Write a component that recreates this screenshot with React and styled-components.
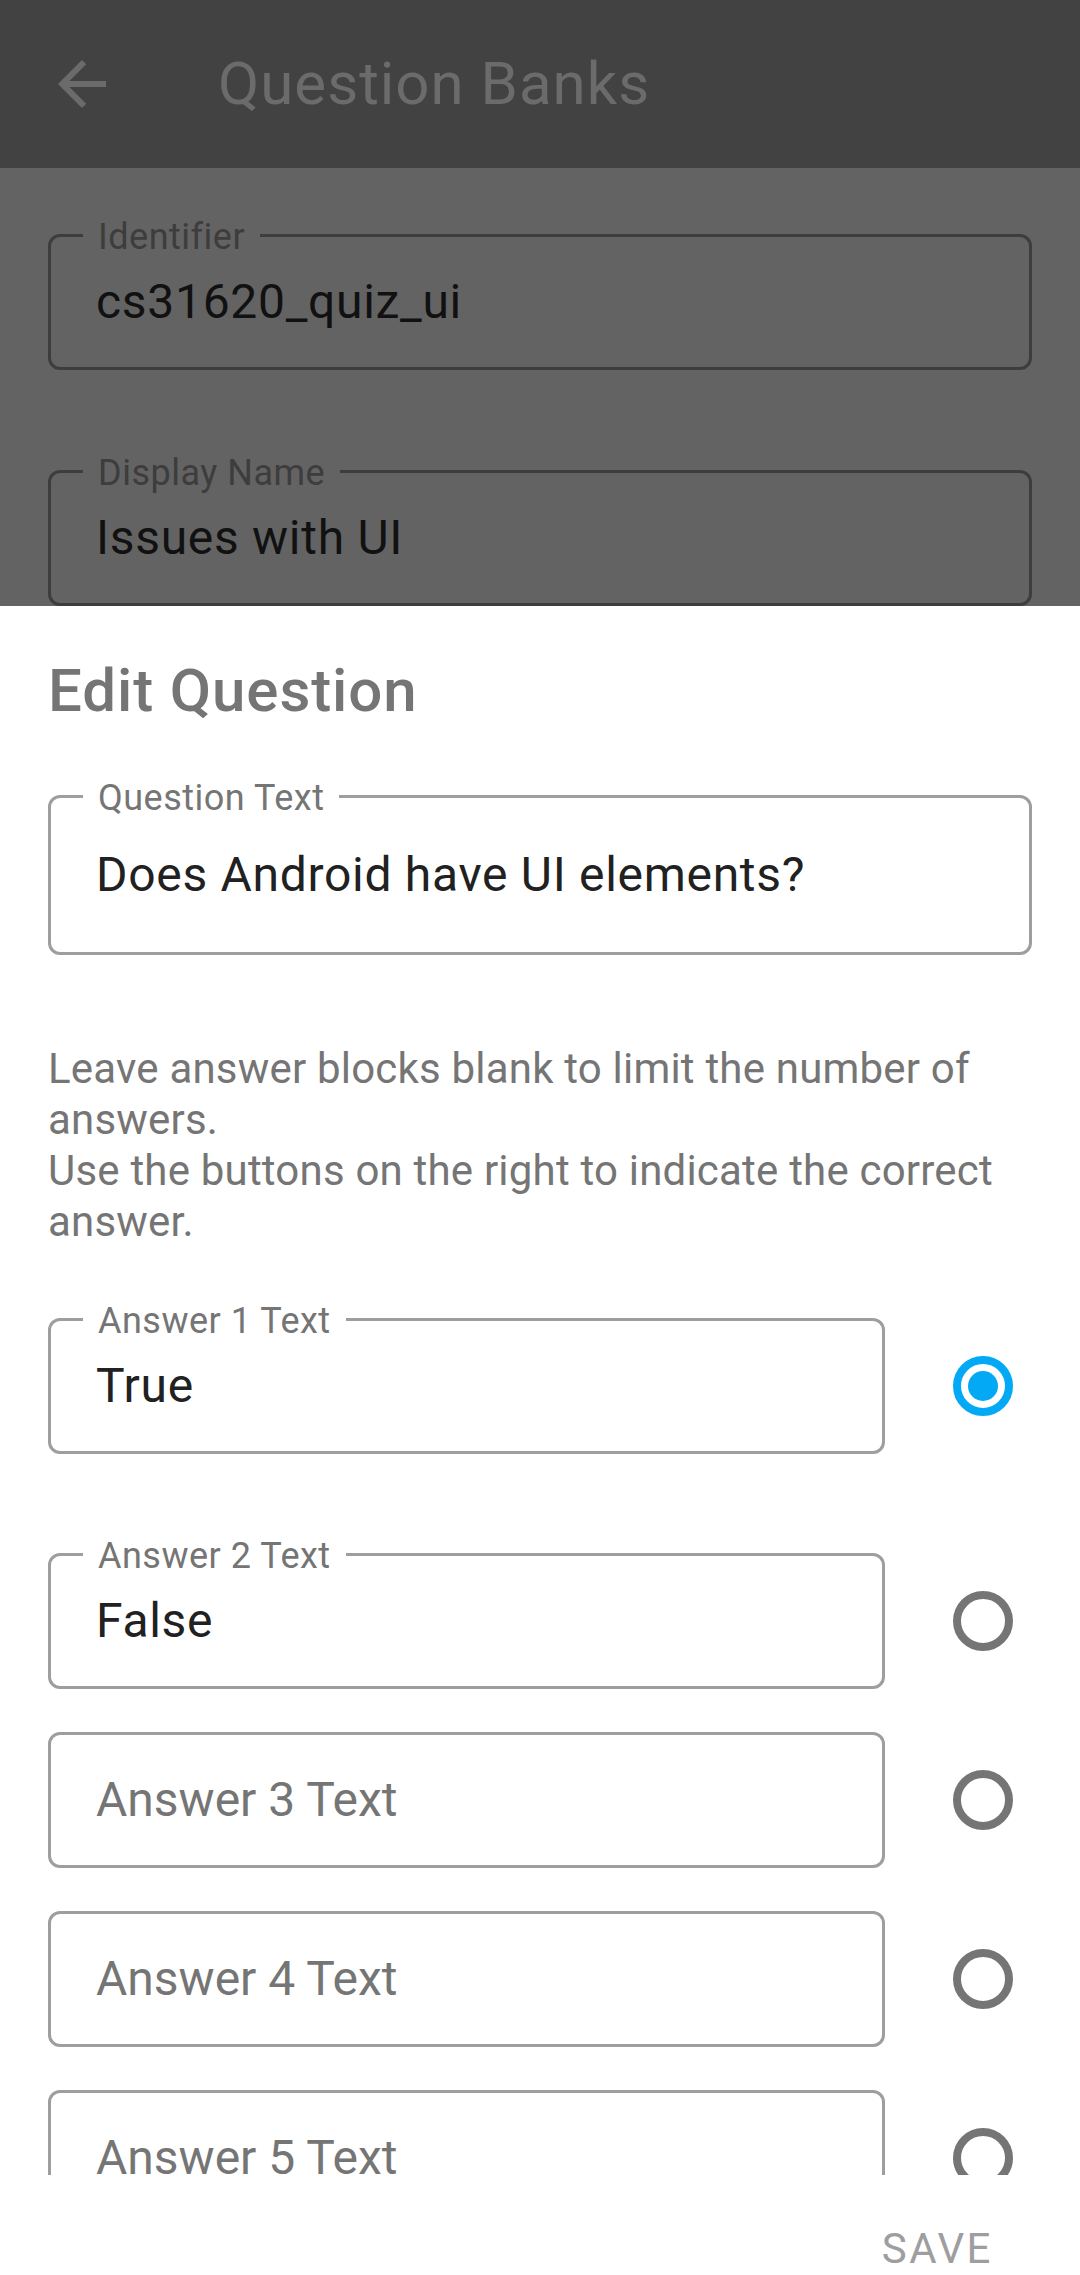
import React from "react";
import styled, { createGlobalStyle } from "styled-components";

const GlobalStyle = createGlobalStyle`
  html, body {
    margin: 0;
    padding: 0;
    background: #ffffff;
  }
  * {
    box-sizing: border-box;
  }
`;

const Screen = styled.div`
  width: 1080px;
  height: 2275px;
  overflow: hidden;
  display: flex;
  flex-direction: column;
  background: #ffffff;
  font-family: Roboto, "Noto Sans", "Liberation Sans", sans-serif;
`;

const Toolbar = styled.header`
  flex: none;
  height: 168px;
  background: #424242;
  display: flex;
  align-items: center;
`;

const BackButton = styled.button`
  width: 72px;
  height: 72px;
  margin-left: 46px;
  padding: 0;
  border: none;
  background: none;
  display: flex;
  align-items: center;
  justify-content: center;
  svg {
    width: 72px;
    height: 72px;
    fill: #6b6b6b;
  }
`;

const Title = styled.h1`
  margin: 0 0 0 100px;
  font-size: 60px;
  font-weight: 400;
  line-height: 70px;
  letter-spacing: 1px;
  color: #6b6b6b;
`;

const Backdrop = styled.section`
  flex: none;
  height: 438px;
  overflow: hidden;
  background: #636363;
  padding: 66px 48px 0;
  display: flex;
  flex-direction: column;
  gap: 100px;
`;

const Box = styled.div`
  position: relative;
  flex: none;
  height: ${(p) => (p.$tall ? 160 : 136)}px;
  border: 3px solid ${(p) => (p.$dim ? "#3d3d3d" : "#9e9e9e")};
  border-radius: 12px;
  padding-left: 45px;
  display: flex;
  align-items: center;
`;

const FloatLabel = styled.span`
  position: absolute;
  left: 32px;
  top: -18px;
  padding: 0 15px;
  font-size: 36px;
  line-height: 36px;
  letter-spacing: 0.5px;
  color: ${(p) => (p.$dim ? "#3d3d3d" : "#757575")};
  background: ${(p) => (p.$dim ? "#636363" : "#ffffff")};
`;

const Value = styled.span`
  font-size: 48px;
  line-height: 56px;
  letter-spacing: ${(p) => (p.$placeholder ? 0 : 0.7)}px;
  color: ${(p) => (p.$placeholder ? "#757575" : p.$dim ? "#111111" : "#212121")};
`;

const Sheet = styled.section`
  flex: 1;
  background: #ffffff;
  display: flex;
  flex-direction: column;
  overflow: hidden;
`;

const SheetBody = styled.div`
  flex: none;
  height: 1569px;
  overflow: hidden;
  padding-top: 50px;
  display: flex;
  flex-direction: column;
`;

const Heading = styled.h2`
  margin: 0 48px;
  font-size: 60px;
  font-weight: 500;
  line-height: 70px;
  letter-spacing: 0.9px;
  color: #757575;
`;

const QuestionWrap = styled.div`
  margin: 69px 48px 0;
`;

const Hint = styled.div`
  margin: 88px 48px 0;
  font-size: 42px;
  line-height: 51px;
  letter-spacing: 0.2px;
  color: #757575;
  p {
    margin: 0;
  }
`;

const AnswerList = styled.div`
  margin-top: 15px;
  display: flex;
  flex-direction: column;
  gap: 43px;
`;

const AnswerRow = styled.div`
  display: grid;
  grid-template-columns: 1fr 195px;
  align-items: center;
  padding-left: 48px;
  padding-top: ${(p) => (p.$labeled ? 56 : 0)}px;
`;

const Radio = styled.span`
  justify-self: center;
  width: 60px;
  height: 60px;
  border-radius: 50%;
  border: 8px solid ${(p) => (p.$checked ? "#03a9f4" : "#757575")};
  display: flex;
  align-items: center;
  justify-content: center;
  &::after {
    content: "";
    display: ${(p) => (p.$checked ? "block" : "none")};
    width: 30px;
    height: 30px;
    border-radius: 50%;
    background: #03a9f4;
  }
`;

const Footer = styled.div`
  flex: none;
  height: 100px;
  padding: 47px 87px 0 0;
  display: flex;
  justify-content: flex-end;
`;

const SaveButton = styled.button`
  padding: 0;
  border: none;
  background: none;
  font-family: inherit;
  font-size: 42px;
  font-weight: 400;
  line-height: 49px;
  letter-spacing: 2.5px;
  color: #9e9e9e;
  text-transform: uppercase;
`;

function Field({ label, value, placeholder, dim, tall }) {
  return (
    <Box $dim={dim} $tall={tall}>
      {value ? <FloatLabel $dim={dim}>{label}</FloatLabel> : null}
      {value ? (
        <Value $dim={dim}>{value}</Value>
      ) : (
        <Value $placeholder>{placeholder}</Value>
      )}
    </Box>
  );
}

const answers = [
  { label: "Answer 1 Text", value: "True", checked: true },
  { label: "Answer 2 Text", value: "False" },
  { label: "Answer 3 Text", value: "" },
  { label: "Answer 4 Text", value: "" },
  { label: "Answer 5 Text", value: "" },
];

export default function App() {
  return (
    <>
      <GlobalStyle />
      <Screen>
        <Toolbar>
          <BackButton aria-label="Back">
            <svg viewBox="0 0 24 24">
              <path d="M20 11H7.83l5.59-5.59L12 4l-8 8 8 8 1.41-1.41L7.83 13H20v-2z" />
            </svg>
          </BackButton>
          <Title>Question Banks</Title>
        </Toolbar>

        <Backdrop>
          <Field dim label="Identifier" value="cs31620_quiz_ui" />
          <Field dim label="Display Name" value="Issues with UI" />
        </Backdrop>

        <Sheet>
          <SheetBody>
            <Heading>Edit Question</Heading>
            <QuestionWrap>
              <Field tall label="Question Text" value="Does Android have UI elements?" />
            </QuestionWrap>
            <Hint>
              <p>Leave answer blocks blank to limit the number of answers.</p>
              <p>Use the buttons on the right to indicate the correct answer.</p>
            </Hint>
            <AnswerList>
              {answers.map((a) => (
                <AnswerRow key={a.label} $labeled={!!a.value}>
                  <Field label={a.label} value={a.value} placeholder={a.label} />
                  <Radio $checked={a.checked} />
                </AnswerRow>
              ))}
            </AnswerList>
          </SheetBody>
          <Footer>
            <SaveButton>Save</SaveButton>
          </Footer>
        </Sheet>
      </Screen>
    </>
  );
}
